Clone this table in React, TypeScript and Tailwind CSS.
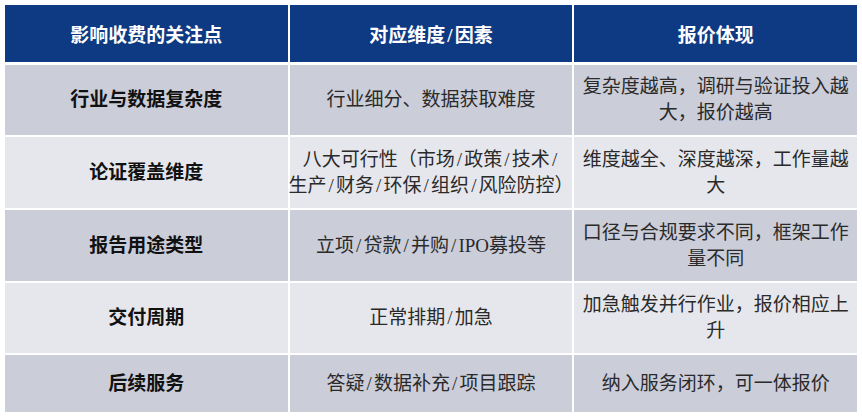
const rows: { h: string; bg: string; a: string; b: string[]; c: string[] }[] = [
  { h: 'h-[70px]', bg: 'bg-[#cbcdd9]', a: '行业与数据复杂度', b: ['行业细分、数据获取难度'], c: ['复杂度越高，调研与验证投入越', '大，报价越高'] },
  { h: 'h-[71px]', bg: 'bg-[#e6e7ec]', a: '论证覆盖维度', b: ['八大可行性（市场/政策/技术/', '生产/财务/环保/组织/风险防控）'], c: ['维度越全、深度越深，工作量越', '大'] },
  { h: 'h-[71px]', bg: 'bg-[#cbcdd9]', a: '报告用途类型', b: ['立项/贷款/并购/IPO募投等'], c: ['口径与合规要求不同，框架工作', '量不同'] },
  { h: 'h-[70px]', bg: 'bg-[#e6e7ec]', a: '交付周期', b: ['正常排期/加急'], c: ['加急触发并行作业，报价相应上', '升'] },
  { h: 'h-[57px]', bg: 'bg-[#cbcdd9]', a: '后续服务', b: ['答疑/数据补充/项目跟踪'], c: ['纳入服务闭环，可一体报价'] },
]

// 半角斜杠占半个字宽，跟原图的宋体一致
function Slashed({ text }: { text: string }) {
  const parts = text.split('/')
  return (
    <>
      {parts.map((p, i) => (
        <span key={i}>
          {p}
          {i < parts.length - 1 && <span className="inline-block w-[0.5em] text-center">/</span>}
        </span>
      ))}
    </>
  )
}

function Lines({ lines }: { lines: string[] }) {
  return (
    <div className="text-center">
      {lines.map((l, i) => (
        <div key={i} className="whitespace-nowrap">
          <Slashed text={l} />
        </div>
      ))}
    </div>
  )
}

export default function App() {
  return (
    <div
      className="w-[862px] h-[416px] bg-white p-[5px] text-[19px] leading-[26px]"
      style={{ fontFamily: '"Liberation Serif", "Noto Sans CJK SC", serif' }}
    >
      <div className="w-[852px] flex flex-col gap-[2px]">
        {/* 表头 */}
        <div className="grid grid-cols-3 gap-x-[2px] h-[57px] mb-px text-white font-bold">
          <div className="bg-[#0e3a84] flex items-center justify-center pt-1">影响收费的关注点</div>
          <div className="bg-[#0e3a84] flex items-center justify-center pt-1">
            <Slashed text="对应维度/因素" />
          </div>
          <div className="bg-[#0e3a84] flex items-center justify-center pt-1">报价体现</div>
        </div>

        {rows.map((r, i) => (
          <div key={i} className={`grid grid-cols-3 gap-x-[2px] ${r.h}`}>
            <div className={`${r.bg} flex items-center justify-center font-bold text-[#111]`}>{r.a}</div>
            <div className={`${r.bg} flex items-center justify-center text-[#2a2a2a]`}>
              <Lines lines={r.b} />
            </div>
            <div className={`${r.bg} flex items-center justify-center text-[#2a2a2a]`}>
              <Lines lines={r.c} />
            </div>
          </div>
        ))}
      </div>
    </div>
  )
}
